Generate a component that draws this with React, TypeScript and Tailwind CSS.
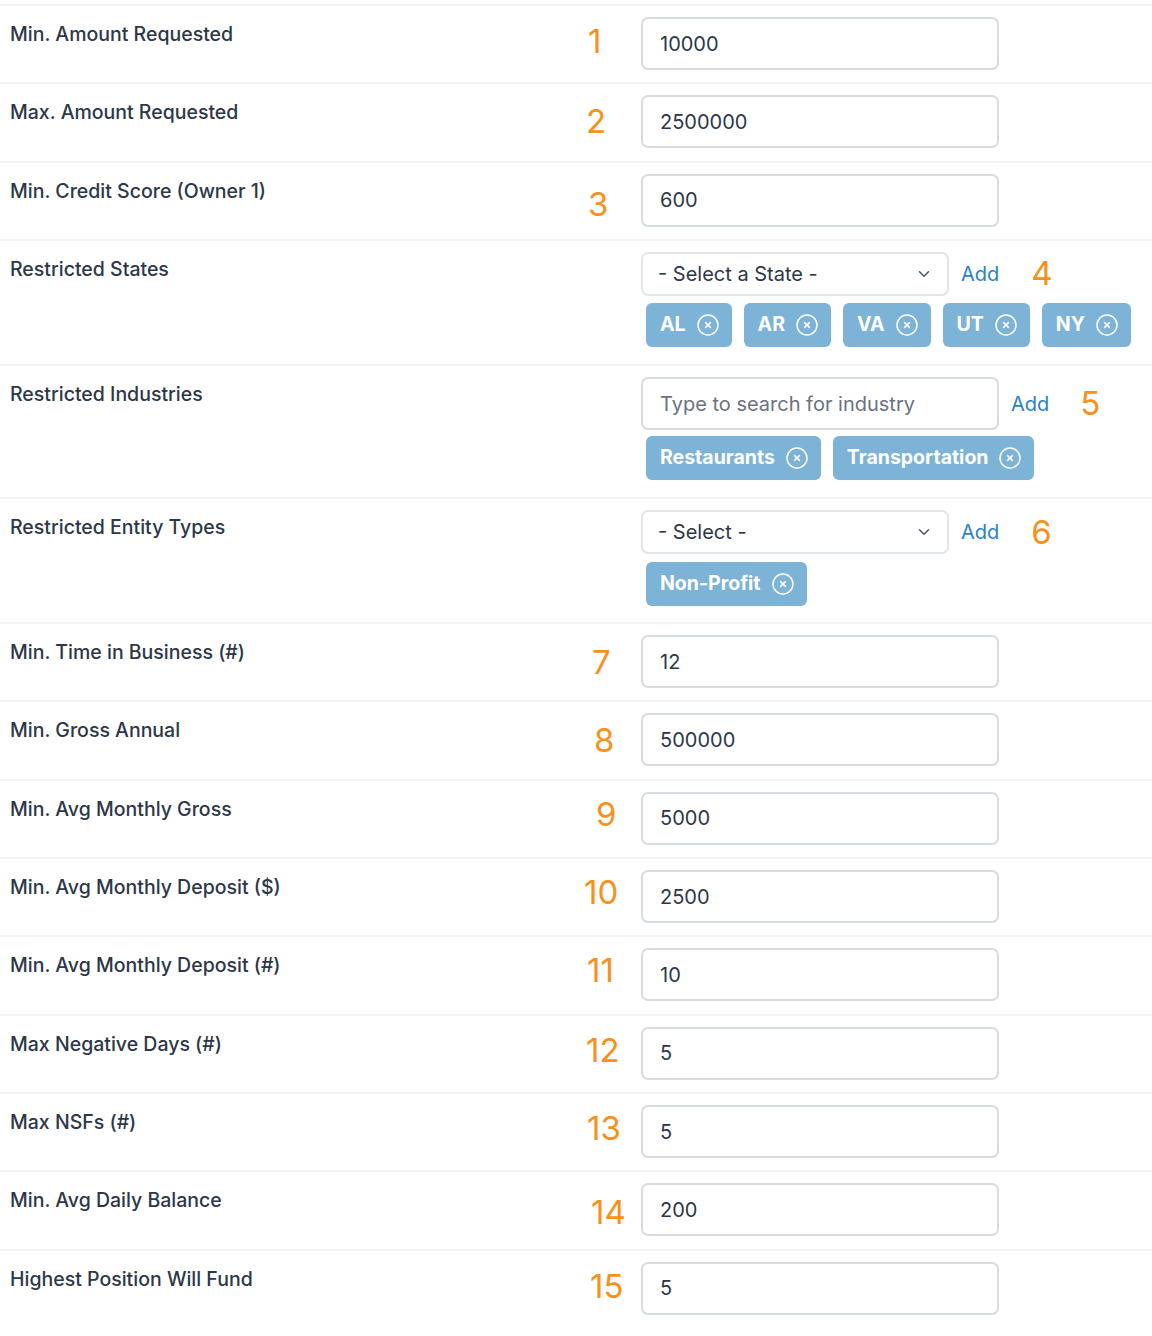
import { ChevronDown } from "lucide-react";

type Field = {
  label: string;
  value: string;
  num: string;
  numClass: string;
};

const FIELDS_TOP: Field[] = [
  { label: "Min. Amount Requested", value: "10000", num: "1", numClass: "pl-[27px] pt-[4px]" },
  { label: "Max. Amount Requested", value: "2500000", num: "2", numClass: "pl-[25px] pt-[6px]" },
  { label: "Min. Credit Score (Owner 1)", value: "600", num: "3", numClass: "pl-[27px] pt-[10px]" },
];

const FIELDS_BOTTOM: Field[] = [
  { label: "Min. Time in Business (#)", value: "12", num: "7", numClass: "pl-[31px] pt-[7px]" },
  { label: "Min. Gross Annual", value: "500000", num: "8", numClass: "pl-[33px] pt-[7px]" },
  { label: "Min. Avg Monthly Gross", value: "5000", num: "9", numClass: "pl-[35px] pt-[2px]" },
  { label: "Min. Avg Monthly Deposit ($)", value: "2500", num: "10", numClass: "pl-[23px] pt-[2px]" },
  { label: "Min. Avg Monthly Deposit (#)", value: "10", num: "11", numClass: "pl-[26px] pt-[2px]" },
  { label: "Max Negative Days (#)", value: "5", num: "12", numClass: "pl-[25px] pt-[3px]" },
  { label: "Max NSFs (#)", value: "5", num: "13", numClass: "pl-[26px] pt-[3px]" },
  { label: "Min. Avg Daily Balance", value: "200", num: "14", numClass: "pl-[30px] pt-[9px]" },
  { label: "Highest Position Will Fund", value: "5", num: "15", numClass: "pl-[29px] pt-[4px]" },
];

const labelCls = "w-[641px] shrink-0 pl-[10px] pt-[3px] text-[19.5px] font-medium text-[#2d3748]";
const inputCls =
  "h-[53px] w-[358px] rounded-[7px] border-2 border-[#d7dce3] bg-white px-[17px] text-[20px] text-[#2d3748] outline-none";
const numCls = "text-[33px] leading-[40px] text-[#f7911c]";

function RemoveIcon() {
  return (
    <svg width="22" height="22" viewBox="0 0 22 22" fill="none" aria-hidden="true">
      <circle cx="11" cy="11" r="10" stroke="white" strokeWidth="1.5" />
      <path d="M8.6 8.6l4.8 4.8M13.4 8.6l-4.8 4.8" stroke="white" strokeWidth="1.5" strokeLinecap="round" />
    </svg>
  );
}

function Chip({ text }: { text: string }) {
  return (
    <span className="flex h-[44px] items-center gap-[11px] rounded-[6px] bg-[#7db3d7] pl-[14px] pr-[13px] text-[19.5px] font-bold text-white">
      {text}
      <RemoveIcon />
    </span>
  );
}

function SimpleRow({ field }: { field: Field }) {
  return (
    <div className="flex border-t-2 border-[#f1f3f5] pt-[11px] pb-[12.35px]">
      <div className={labelCls}>{field.label}</div>
      <div className="flex">
        <div className="w-[80px] -ml-[80px]">
          <div className={`${numCls} ${field.numClass}`}>{field.num}</div>
        </div>
        <input className={inputCls} defaultValue={field.value} readOnly />
      </div>
    </div>
  );
}

function SelectBox({ text }: { text: string }) {
  return (
    <div className="flex h-[44px] w-[308px] items-center justify-between rounded-[7px] border-2 border-[#e2e6eb] bg-white pl-[15px] pr-[14px] text-[20px] text-[#2d3748]">
      <span>{text}</span>
      <ChevronDown className="size-[18px] text-[#4a5568]" strokeWidth={2} />
    </div>
  );
}

export default function App() {
  return (
    <div className="w-[1152px] bg-white pt-[4px] font-['Inter',sans-serif]">
      {FIELDS_TOP.map((f) => (
        <SimpleRow key={f.label} field={f} />
      ))}

      <div className="flex border-t-2 border-[#f1f3f5] pt-[11px] pb-[17px]">
        <div className={labelCls}>Restricted States</div>
        <div className="flex flex-col gap-[7px]">
          <div className="flex items-center">
            <SelectBox text="- Select a State -" />
            <span className="ml-[12px] text-[20px] text-[#2b82c4]">Add</span>
            <span className={`${numCls} ml-[32px] -mt-[2px]`}>4</span>
          </div>
          <div className="flex gap-[12px] pl-[5px]">
            {["AL", "AR", "VA", "UT", "NY"].map((s) => (
              <Chip key={s} text={s} />
            ))}
          </div>
        </div>
      </div>

      <div className="flex border-t-2 border-[#f1f3f5] pt-[11px] pb-[17px]">
        <div className={labelCls}>Restricted Industries</div>
        <div className="flex flex-col gap-[6px]">
          <div className="flex items-center">
            <input
              className={`${inputCls} placeholder:text-[#6b7280]`}
              placeholder="Type to search for industry"
              readOnly
            />
            <span className="ml-[12px] text-[20px] text-[#2b82c4]">Add</span>
            <span className={`${numCls} ml-[31px] -mt-[2px]`}>5</span>
          </div>
          <div className="flex gap-[12px] pl-[5px]">
            <Chip text="Restaurants" />
            <Chip text="Transportation" />
          </div>
        </div>
      </div>

      <div className="flex border-t-2 border-[#f1f3f5] pt-[11px] pb-[16px]">
        <div className={labelCls}>Restricted Entity Types</div>
        <div className="flex flex-col gap-[8px]">
          <div className="flex items-center">
            <SelectBox text="- Select -" />
            <span className="ml-[12px] text-[20px] text-[#2b82c4]">Add</span>
            <span className={`${numCls} ml-[32px]`}>6</span>
          </div>
          <div className="flex gap-[12px] pl-[5px]">
            <Chip text="Non-Profit" />
          </div>
        </div>
      </div>

      {FIELDS_BOTTOM.map((f) => (
        <SimpleRow key={f.label} field={f} />
      ))}
    </div>
  );
}
